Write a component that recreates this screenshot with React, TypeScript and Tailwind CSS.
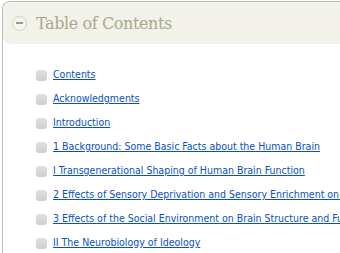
const ITEMS = [
  "Contents",
  "Acknowledgments",
  "Introduction",
  "1 Background: Some Basic Facts about the Human Brain",
  "I Transgenerational Shaping of Human Brain Function",
  "2 Effects of Sensory Deprivation and Sensory Enrichment on Brain Structure and Function",
  "3 Effects of the Social Environment on Brain Structure and Function",
  "II The Neurobiology of Ideology",
];

export default function App() {
  return (
    <div className="h-[253px] w-[340px] overflow-hidden bg-white pl-[2px] pt-[1px]">
      <div className="h-full rounded-tl-[8px] border-l border-t border-[#bdbdb8] bg-white">
        {/* Header */}
        <div className="flex h-[42px] items-center rounded-bl-[8px] rounded-tl-[7px] bg-[#f2f2eb] pl-[9px]">
          <span className="flex h-[15px] w-[15px] items-center justify-center rounded-full border-[1.5px] border-[#d4d4c0] bg-[#f6f6f0]">
            <span className="h-[2px] w-[7px] bg-[#9f9f80]" />
          </span>
          <h2
            className="ml-[9px] mt-[2px] text-[16px] leading-none tracking-[-0.4px] text-[#a9a98a]"
            style={{ fontFamily: '"DejaVu Serif", "Liberation Serif", serif' }}
          >
            Table of Contents
          </h2>
        </div>

        {/* List */}
        <ul className="pl-[33px] pt-[19px]">
          {ITEMS.map((t) => (
            <li key={t} className="flex h-[24px] items-center gap-[6px] whitespace-nowrap">
              <span className="h-[11px] w-[11px] shrink-0 rounded-[3px] bg-gradient-to-b from-[#e2e2e2] to-[#cfcfcf]" />
              <a
                href="#"
                className="text-[10.5px] text-[#0b4fc6] underline"
                style={{ fontFamily: '"DejaVu Sans Condensed", "DejaVu Sans", sans-serif', fontStretch: "condensed" }}
              >
                {t}
              </a>
            </li>
          ))}
        </ul>
      </div>
    </div>
  );
}
